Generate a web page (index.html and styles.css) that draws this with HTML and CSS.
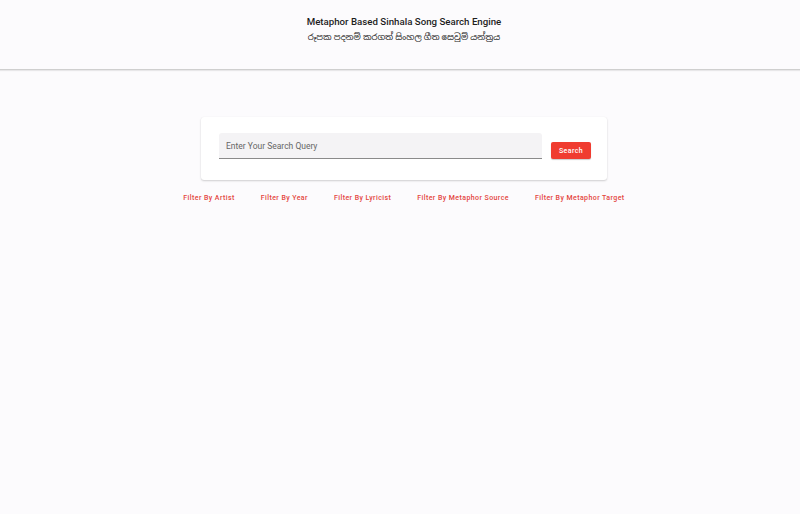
FILE: index.html
```html
<!DOCTYPE html>
<html>
<head>
<meta charset="utf-8">
<link rel="stylesheet" href="styles.css">
</head>
<body>
<header class="header">
  <div class="title">Metaphor Based Sinhala Song Search Engine</div>
  <div class="subtitle">රූපක පදනම් කරගත් සිංහල ගීත සෙවුම් යන්ත්‍රය</div>
</header>
<main class="main">
  <div class="card">
    <div class="field">
      <input class="input" type="text" placeholder="Enter Your Search Query">
    </div>
    <button class="search-btn">Search</button>
  </div>
  <div class="filters">
    <button class="filter">Filter By Artist</button>
    <button class="filter">Filter By Year</button>
    <button class="filter">Filter By Lyricist</button>
    <button class="filter">Filter By Metaphor Source</button>
    <button class="filter">Filter By Metaphor Target</button>
  </div>
</main>
</body>
</html>
```

FILE: styles.css
```css
* { box-sizing: border-box; }
html, body {
  margin: 0;
  padding: 0;
  background: #fcfbfd;
  font-family: Roboto, "Noto Sans", "Noto Sans Sinhala", sans-serif;
  color: #222;
}
.header {
  height: 70px;
  border-bottom: 1px solid #cfcfcf;
  box-shadow: 0 1px 1px rgba(0,0,0,0.08);
  display: flex;
  flex-direction: column;
  align-items: center;
  padding: 15px 0 0 8px;
}
.title {
  font-size: 9.7px;
  font-weight: 500;
  line-height: 14px;
  color: #1e1e1e;
}
.subtitle {
  font-size: 8.5px;
  line-height: 17px;
  color: #222;
}
.main {
  display: flex;
  flex-direction: column;
  align-items: center;
  padding: 47px 0 0 8px;
}
.card {
  width: 406px;
  height: 63px;
  background: #fff;
  border-radius: 3px;
  box-shadow: 0 1px 2px rgba(0,0,0,0.18), 0 0 1px rgba(0,0,0,0.06);
  display: flex;
  align-items: flex-start;
  padding: 16px 16px 0 18px;
  gap: 9px;
}
.field {
  flex: 1;
}
.input {
  width: 100%;
  height: 26px;
  border: none;
  border-bottom: 1px solid #8a8a8a;
  background: #f4f3f5;
  border-radius: 3px 3px 0 0;
  padding: 0 7px;
  font-family: Roboto, sans-serif;
  font-size: 8.5px;
  color: #333;
  outline: none;
}
.input::placeholder { color: #666; }
.search-btn {
  margin-top: 9px;
  width: 40px;
  height: 17px;
  border: none;
  border-radius: 2px;
  background: #f03c30;
  color: #fff;
  font-family: Roboto, sans-serif;
  font-size: 7px;
  font-weight: 500;
  letter-spacing: 0.4px;
  padding: 0;
  box-shadow: 0 1px 1px rgba(0,0,0,0.2);
}
.filters {
  display: flex;
  margin-top: 11px;
}
.filter {
  border: none;
  background: none;
  color: #e4463d;
  font-family: Roboto, sans-serif;
  font-size: 7px;
  font-weight: 500;
  letter-spacing: 0.42px;
  padding: 3px 13px;
  line-height: 9px;
}
```
